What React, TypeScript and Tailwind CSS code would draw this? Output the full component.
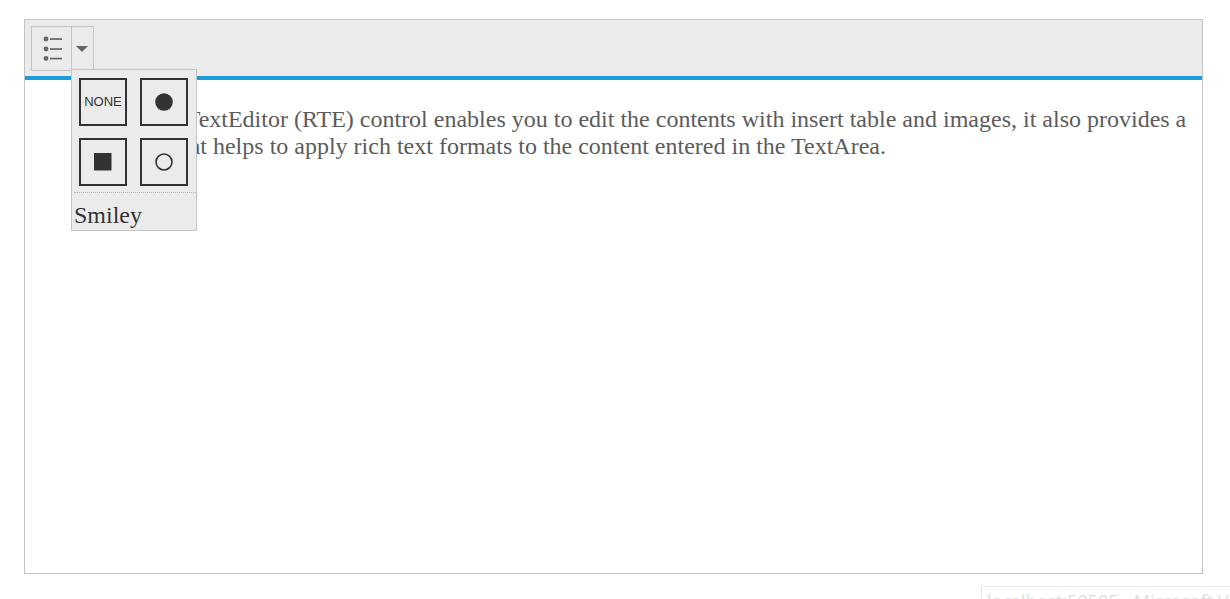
import type { ReactNode } from "react";

function ListIcon() {
  return (
    <svg width="20" height="26" viewBox="0 0 20 26" fill="#676767" aria-hidden="true">
      <circle cx="3" cy="3" r="2.4" />
      <circle cx="3" cy="13" r="2.4" />
      <circle cx="3" cy="22.5" r="2.4" />
      <rect x="7" y="2.2" width="12" height="1.7" />
      <rect x="7" y="12.2" width="12" height="1.7" />
      <rect x="7" y="21.7" width="12" height="1.7" />
    </svg>
  );
}

function Caret() {
  return (
    <svg width="12" height="6" viewBox="0 0 12 6" aria-hidden="true">
      <path d="M0 0H12L6 6Z" fill="#666666" />
    </svg>
  );
}

function Tile({ label, children }: { label: string; children: ReactNode }) {
  return (
    <button
      type="button"
      aria-label={label}
      className="flex size-12 items-center justify-center border-2 border-[#333333] font-['Liberation_Sans',sans-serif] text-[13px] leading-5 text-[#333333]"
    >
      {children}
    </button>
  );
}

function ListStyleMenu() {
  return (
    <div className="absolute -left-px top-[42px] z-10 w-[126px] border border-[#c3c3c3] bg-[#ebebeb] pt-2">
      <div className="grid grid-cols-[48px_48px] gap-x-[13px] gap-y-3 pl-[7px]">
        <Tile label="NONE">NONE</Tile>
        <Tile label="Disc">
          <svg width="20" height="20" viewBox="0 0 20 20" aria-hidden="true">
            <circle cx="10" cy="10" r="8.8" fill="#333333" />
          </svg>
        </Tile>
        <Tile label="Square">
          <svg width="20" height="20" viewBox="0 0 20 20" aria-hidden="true">
            <rect x="1" y="1" width="17.5" height="17.5" fill="#333333" />
          </svg>
        </Tile>
        <Tile label="Circle">
          <svg width="20" height="20" viewBox="0 0 20 20" aria-hidden="true">
            <circle cx="10" cy="10" r="8" fill="none" stroke="#333333" strokeWidth="1.6" />
          </svg>
        </Tile>
      </div>
      <div className="ml-0.5 mt-1.5 border-t border-dotted border-[#b9b9b9]" />
      <button type="button" className="block w-full px-0.5 pt-2 pb-px text-left text-2xl leading-7 text-[#333333]">
        Smiley
      </button>
    </div>
  );
}

export default function App() {
  return (
    <div className="relative flex h-screen flex-col overflow-hidden bg-white pt-[19px] pr-[27px] pb-[25px] pl-6 font-['Liberation_Serif',serif]">
      <main className="flex flex-1 flex-col border border-[#c3c3c3]">
        <div role="toolbar" className="flex border-b-4 border-[#1c9bd9] bg-[#ebebeb] px-1.5 pt-1.5 pb-[5px]">
          <div className="flex h-[45px] border border-[#c3c3c3]">
            <button type="button" aria-label="Unordered list" className="flex w-[39px] items-center justify-center pl-0.5">
              <ListIcon />
            </button>
            <div className="relative flex border-l border-[#c3c3c3]">
              <button type="button" aria-label="List styles" aria-expanded="true" className="flex w-[21px] items-center justify-start pl-1">
                <Caret />
              </button>
              <ListStyleMenu />
            </div>
          </div>
        </div>
        <div className="flex-1 pt-[26px] pr-3 pl-[72px] text-2xl leading-[27px] text-[#5c5c5c]">
          <p>
            The RichTextEditor (RTE) control enables you to edit the contents with insert table and images, it also
            provides a toolbar that helps to apply rich text formats to the content entered in the TextArea.
          </p>
        </div>
      </main>
      <div className="absolute top-[586px] left-[981px] border border-[#e6e6e6] bg-white px-[5px] font-['Open_Sans',sans-serif] text-lg leading-7 whitespace-nowrap text-[#dedede]">
        localhost:50505 - Microsoft Visual Studio
      </div>
    </div>
  );
}
